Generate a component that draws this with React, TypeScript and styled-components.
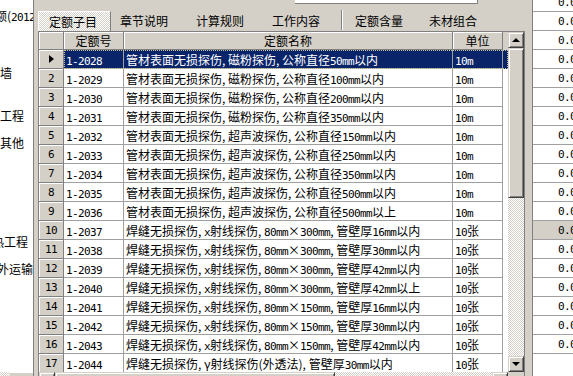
import React from "react";
import styled, { createGlobalStyle, css } from "styled-components";

const FACE = "#d4d0c8";
const SHADOW = "#808080";
const DARK = "#404040";
const LINE = "#a0a0a0";
const NAVY = "#0a246a";

const dither = css`
  background-color: ${FACE};
  background-image: conic-gradient(#fff 25%, ${FACE} 0 50%, #fff 0 75%, ${FACE} 0);
  background-size: 2px 2px;
`;

const raised = css`
  background: ${FACE};
  border: 1px solid;
  border-color: ${FACE} ${DARK} ${DARK} ${FACE};
  box-shadow: inset 1px 1px 0 #fff, inset -1px -1px 0 ${SHADOW};
`;

const Global = createGlobalStyle`
  html, body { margin: 0; padding: 0; background: ${FACE}; }
  body {
    font-family: "Noto Sans CJK SC", "Noto Sans", sans-serif;
    font-size: 12px;
    color: #000;
  }
  * { box-sizing: border-box; }
`;

/* latin runs: 6px monospace advance like the original bitmap font */
const Latin = styled.span`
  font-family: "DejaVu Sans Mono", "Liberation Mono", monospace;
  font-size: 11px;
  letter-spacing: -0.62px;
`;

function Mixed({ text }: { text: string }) {
  const parts = text.split(/([A-Za-z0-9.\-]+)/);
  return (
    <>
      {parts.map((p, i) => (i % 2 ? <Latin key={i}>{p}</Latin> : p))}
    </>
  );
}

const Screen = styled.div`
  width: 573px;
  height: 376px;
  overflow: hidden;
  display: flex;
  background: ${FACE};
`;

/* ---------- left tree ---------- */
const TreePane = styled.div`
  width: 34px;
  flex: none;
  display: flex;
  flex-direction: column;
  background: #fff;
  border-right: 1px solid ${SHADOW};
  overflow: hidden;
`;

const TreeList = styled.div`
  flex: 1;
  display: flex;
  flex-direction: column;
  overflow: hidden;
`;

const TreeItem = styled.div<{ $top: number; $shift: number }>`
  margin-top: ${(p) => p.$top}px;
  margin-left: ${(p) => p.$shift}px;
  height: 14px;
  line-height: 14px;
  white-space: nowrap;
`;

const TreeHScroll = styled.div`
  height: 4px;
  flex: none;
  display: flex;
`;

const TreeTrack = styled.div`
  width: 10px;
  ${dither};
`;

const TreeThumb = styled.div`
  flex: 1;
  background: ${FACE};
  border-top: 1px solid #fff;
`;

const Gap = styled.div<{ $w: number }>`
  width: ${(p) => p.$w}px;
  flex: none;
`;

/* ---------- main pane ---------- */
const MainPane = styled.div`
  width: 490px;
  flex: none;
  display: flex;
  flex-direction: column;
`;

const TopStrip = styled.div`
  height: 9px;
  flex: none;
  display: flex;
  padding-left: 257px;
`;

const EditStub = styled.div`
  width: 183px;
  height: 4px;
  background: #fff;
  border-right: 1px solid ${SHADOW};
  border-bottom: 1px solid ${SHADOW};
`;

const TabBar = styled.div`
  height: 22px;
  flex: none;
  display: flex;
  align-items: stretch;
`;

const ActiveTab = styled.div`
  width: 73px;
  margin-top: 2px;
  padding-left: 10px;
  ${dither};
  border-top: 1px solid #fff;
  border-left: 1px solid #fff;
  border-right: 1px solid ${SHADOW};
  display: flex;
  align-items: center;
  white-space: nowrap;
`;

const TabLabel = styled.div<{ $ml: number }>`
  margin-left: ${(p) => p.$ml}px;
  padding-top: 1px;
  display: flex;
  align-items: center;
  white-space: nowrap;
`;

const TabDivider = styled.div<{ $ml: number }>`
  margin: 1px 0 1px ${(p) => p.$ml}px;
  width: 2px;
  border-left: 1px solid ${SHADOW};
  border-right: 1px solid #fff;
`;

const Grid = styled.div`
  width: 487px;
  height: 358px;
  flex: none;
  border: 1px solid ${SHADOW};
  display: grid;
  grid-template-columns: 469px 16px;
  grid-template-rows: 340px 16px;
  background: #fff;
`;

const Table = styled.div`
  display: flex;
  flex-direction: column;
  overflow: hidden;
`;

const cols = "60px 329px 50px 1fr";

const HeaderRow = styled.div`
  height: 18px;
  flex: none;
  display: grid;
  grid-template-columns: 25px ${cols};
`;

const HeadCell = styled.div`
  background: ${FACE};
  border-right: 1px solid ${SHADOW};
  border-bottom: 1px solid ${SHADOW};
  box-shadow: inset 1px 1px 0 #fff;
  text-align: center;
  line-height: 17px;
  white-space: nowrap;
  overflow: hidden;
`;

const HeadFiller = styled.div`
  background: ${FACE};
`;

const DataRow = styled.div`
  height: 19px;
  flex: none;
  display: flex;
`;

const Indicator = styled.div`
  width: 25px;
  flex: none;
  background: ${FACE};
  border-right: 1px solid ${SHADOW};
  border-bottom: 1px solid ${SHADOW};
  box-shadow: inset 1px 1px 0 #fff;
  display: flex;
  align-items: center;
  justify-content: center;
  padding-top: 2px;
  line-height: 16px;
`;

const Pointer = styled.span`
  margin-top: -2px;
  width: 0;
  height: 0;
  border-top: 4px solid transparent;
  border-bottom: 4px solid transparent;
  border-left: 5px solid #000;
`;

const RowBody = styled.div<{ $sel: boolean }>`
  flex: 1;
  display: grid;
  grid-template-columns: ${cols};
  background: ${(p) => (p.$sel ? NAVY : "#fff")};
  color: ${(p) => (p.$sel ? "#fff" : "#000")};
  ${(p) =>
    p.$sel &&
    css`
      outline: 1px dotted #c8c49c;
      outline-offset: -1px;
    `}
`;

const Cell = styled.div`
  border-right: 1px solid ${LINE};
  border-bottom: 1px solid ${LINE};
  padding: 1px 0 0 2px;
  line-height: 17px;
  white-space: nowrap;
  overflow: hidden;
`;

const FillCell = styled.div``;

const VScroll = styled.div`
  display: flex;
  flex-direction: column;
`;

const ScrollBtn = styled.div`
  width: 16px;
  height: 16px;
  flex: none;
  ${raised};
  display: flex;
  align-items: center;
  justify-content: center;
`;

const ArrowUp = styled.span`
  width: 0;
  height: 0;
  border-left: 4px solid transparent;
  border-right: 4px solid transparent;
  border-bottom: 4px solid #000;
`;

const ArrowDown = styled.span`
  width: 0;
  height: 0;
  border-left: 4px solid transparent;
  border-right: 4px solid transparent;
  border-top: 4px solid #000;
`;

const VThumb = styled.div`
  height: 150px;
  flex: none;
  ${raised};
`;

const Track = styled.div`
  flex: 1;
  ${dither};
`;

const HScroll = styled.div`
  display: flex;
`;

const HThumb = styled.div`
  width: 280px;
  flex: none;
  ${raised};
`;

const Corner = styled.div`
  background: ${FACE};
`;

/* ---------- right pane ---------- */
const DetailPane = styled.div`
  flex: 1;
  background: #fff;
  border-left: 1px solid ${SHADOW};
  overflow: hidden;
  display: flex;
  flex-direction: column;
`;

const DetailList = styled.div`
  margin-top: -7px;
  display: flex;
  flex-direction: column;
`;

const DetailRow = styled.div<{ $sel: boolean }>`
  height: 19px;
  flex: none;
  border-bottom: 1px solid ${LINE};
  padding-left: 25px;
  line-height: 16px;
  white-space: nowrap;
  background: ${(p) => (p.$sel ? FACE : "#fff")};
`;

const treeItems = [
  { text: "定额(2012)", top: 9, shift: -17 },
  { text: "砖砌体墙", top: 43, shift: -36 },
  { text: "安装工程", top: 29, shift: -24 },
  { text: "措施其他", top: 13, shift: -24 },
  { text: "绝热工程", top: 85, shift: -20 },
  { text: "场外运输", top: 13, shift: -15 },
];

const rows: [string, string, string][] = [
  ["1-2028", "管材表面无损探伤, 磁粉探伤, 公称直径50mm以内", "10m"],
  ["1-2029", "管材表面无损探伤, 磁粉探伤, 公称直径100mm以内", "10m"],
  ["1-2030", "管材表面无损探伤, 磁粉探伤, 公称直径200mm以内", "10m"],
  ["1-2031", "管材表面无损探伤, 磁粉探伤, 公称直径350mm以内", "10m"],
  ["1-2032", "管材表面无损探伤, 超声波探伤, 公称直径150mm以内", "10m"],
  ["1-2033", "管材表面无损探伤, 超声波探伤, 公称直径250mm以内", "10m"],
  ["1-2034", "管材表面无损探伤, 超声波探伤, 公称直径350mm以内", "10m"],
  ["1-2035", "管材表面无损探伤, 超声波探伤, 公称直径500mm以内", "10m"],
  ["1-2036", "管材表面无损探伤, 超声波探伤, 公称直径500mm以上", "10m"],
  ["1-2037", "焊缝无损探伤, x射线探伤, 80mm×300mm, 管壁厚16mm以内", "10张"],
  ["1-2038", "焊缝无损探伤, x射线探伤, 80mm×300mm, 管壁厚30mm以内", "10张"],
  ["1-2039", "焊缝无损探伤, x射线探伤, 80mm×300mm, 管壁厚42mm以内", "10张"],
  ["1-2040", "焊缝无损探伤, x射线探伤, 80mm×300mm, 管壁厚42mm以上", "10张"],
  ["1-2041", "焊缝无损探伤, x射线探伤, 80mm×150mm, 管壁厚16mm以内", "10张"],
  ["1-2042", "焊缝无损探伤, x射线探伤, 80mm×150mm, 管壁厚30mm以内", "10张"],
  ["1-2043", "焊缝无损探伤, x射线探伤, 80mm×150mm, 管壁厚42mm以内", "10张"],
  ["1-2044", "焊缝无损探伤, γ射线探伤(外透法), 管壁厚30mm以内", "10张"],
];

const detailValues = Array.from({ length: 19 }, () => "0.00");

export default function App() {
  return (
    <>
      <Global />
      <Screen>
        <TreePane>
          <TreeList>
            {treeItems.map((t) => (
              <TreeItem key={t.text} $top={t.top} $shift={t.shift}>
                <Mixed text={t.text} />
              </TreeItem>
            ))}
          </TreeList>
          <TreeHScroll>
            <TreeTrack />
            <TreeThumb />
          </TreeHScroll>
        </TreePane>
        <Gap $w={4} />
        <MainPane>
          <TopStrip>
            <EditStub />
          </TopStrip>
          <TabBar>
            <ActiveTab>定额子目</ActiveTab>
            <TabLabel $ml={9}>章节说明</TabLabel>
            <TabLabel $ml={28}>计算规则</TabLabel>
            <TabLabel $ml={28}>工作内容</TabLabel>
            <TabDivider $ml={21} />
            <TabLabel $ml={12}>定额含量</TabLabel>
            <TabLabel $ml={26}>未材组合</TabLabel>
          </TabBar>
          <Grid>
            <Table>
              <HeaderRow>
                <HeadCell />
                <HeadCell>定额号</HeadCell>
                <HeadCell>定额名称</HeadCell>
                <HeadCell>单位</HeadCell>
                <HeadFiller />
              </HeaderRow>
              {rows.map(([code, name, unit], i) => (
                <DataRow key={code}>
                  <Indicator>
                    {i === 0 ? <Pointer /> : <Latin>{i + 1}</Latin>}
                  </Indicator>
                  <RowBody $sel={i === 0}>
                    <Cell>
                      <Mixed text={code} />
                    </Cell>
                    <Cell>
                      <Mixed text={name} />
                    </Cell>
                    <Cell>
                      <Mixed text={unit} />
                    </Cell>
                    <FillCell />
                  </RowBody>
                </DataRow>
              ))}
            </Table>
            <VScroll>
              <ScrollBtn>
                <ArrowUp />
              </ScrollBtn>
              <VThumb />
              <Track />
              <ScrollBtn>
                <ArrowDown />
              </ScrollBtn>
            </VScroll>
            <HScroll>
              <ScrollBtn />
              <HThumb />
              <Track />
              <ScrollBtn />
            </HScroll>
            <Corner />
          </Grid>
        </MainPane>
        <Gap $w={4} />
        <DetailPane>
          <DetailList>
            {detailValues.map((v, i) => (
              <DetailRow key={i} $sel={i === 12}>
                <Mixed text={v} />
              </DetailRow>
            ))}
          </DetailList>
        </DetailPane>
      </Screen>
    </>
  );
}
